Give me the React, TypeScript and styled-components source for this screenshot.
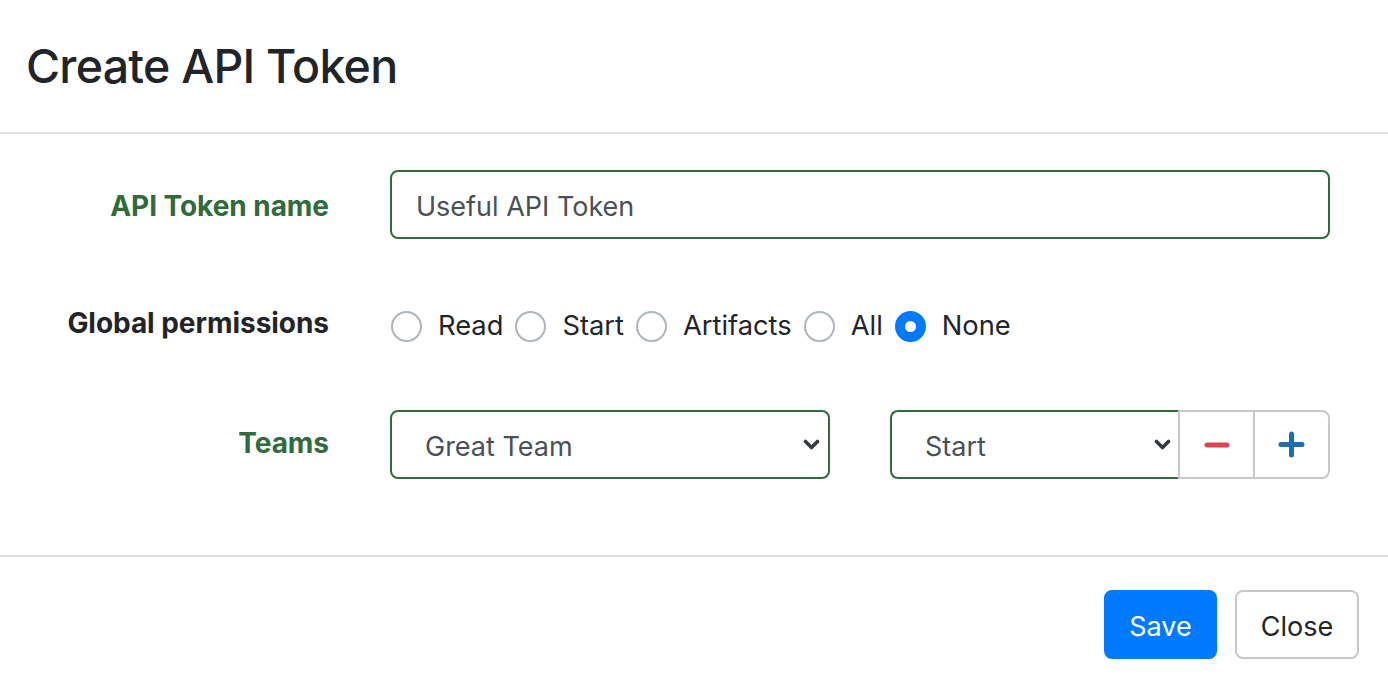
import React from "react";
import styled, { createGlobalStyle, css } from "styled-components";

const GlobalStyle = createGlobalStyle`
  html, body { margin: 0; padding: 0; background: #ffffff; }
  body {
    font-family: Inter, "Liberation Sans", Arial, sans-serif;
    color: #212529;
    -webkit-font-smoothing: antialiased;
  }
  * { box-sizing: border-box; }
`;

const GREEN = "#2f6b3b";

const Modal = styled.div`
  width: 1388px;
  height: 688px;
  display: flex;
  flex-direction: column;
  background: #fff;
  overflow: hidden;
`;

const Header = styled.header`
  height: 134px;
  padding: 37px 28px 0;
  border-bottom: 2px solid #dee2e6;
`;

const Title = styled.h4`
  margin: 0 0 0 -2px;
  font-size: 46.5px;
  line-height: 58px;
  font-weight: 500;
  letter-spacing: -0.75px;
  color: #212529;
`;

const Body = styled.div`
  display: flex;
  flex-direction: column;
  gap: 51px;
  padding: 36px 58px 76px 28px;
  border-bottom: 2px solid #dee2e6;
`;

const FormRow = styled.div`
  display: grid;
  grid-template-columns: 301px 1fr;
  column-gap: 61px;
  align-items: center;
  height: 69px;
`;

const Label = styled.label<{ $valid?: boolean; $shift?: number }>`
  text-align: right;
  font-size: 28px;
  font-weight: 700;
  letter-spacing: -0.05px;
  line-height: 42px;
  color: ${(p) => (p.$valid ? GREEN : "#212529")};
  margin-top: ${(p) => p.$shift ?? 0}px;
`;

const fieldBase = css`
  height: 69px;
  font-family: inherit;
  font-size: 27px;
  color: #495057;
  background: #fff;
  border: 2px solid ${GREEN};
  border-radius: 8px;
  outline: none;
`;

const TextInput = styled.input`
  ${fieldBase};
  width: 100%;
  padding: 3px 24px 0;
`;

const RadioGroup = styled.div`
  display: flex;
  align-items: center;
  margin-top: 3px;
`;

const RadioItem = styled.label`
  display: flex;
  align-items: center;
  margin-left: 1px;
  margin-right: 11px;
  font-size: 27.3px;
  line-height: 42px;
  color: #212529;
`;

const RadioCircle = styled.span<{ $checked?: boolean }>`
  width: 31px;
  height: 31px;
  border-radius: 50%;
  margin-right: 16px;
  display: flex;
  align-items: center;
  justify-content: center;
  ${(p) =>
    p.$checked
      ? css`
          background: #007bff;
          border: 2px solid #007bff;
          &::after {
            content: "";
            width: 11px;
            height: 11px;
            border-radius: 50%;
            background: #fff;
          }
        `
      : css`
          background: #fff;
          border: 2px solid #adb5bd;
        `}
`;

const TeamsGrid = styled.div`
  display: grid;
  grid-template-columns: 1fr 1fr;
  column-gap: 60px;
  height: 69px;
`;

const SelectWrap = styled.div`
  position: relative;
  flex: 1;
  min-width: 0;
  height: 69px;
`;

const Select = styled.select<{ $grouped?: boolean }>`
  ${fieldBase};
  width: 100%;
  appearance: none;
  -webkit-appearance: none;
  padding: 3px 48px 0 33px;
  ${(p) =>
    p.$grouped &&
    css`
      border-right: 0;
      border-radius: 8px 0 0 8px;
    `}
`;

const Chevron = styled.svg<{ $grouped?: boolean }>`
  position: absolute;
  right: ${(p) => (p.$grouped ? "7px" : "10px")};
  top: 28px;
  width: 17px;
  height: 13px;
  pointer-events: none;
`;

const InputGroup = styled.div`
  display: flex;
  height: 69px;
`;

const GroupButton = styled.button<{ $last?: boolean }>`
  width: ${(p) => (p.$last ? "77px" : "75px")};
  height: 69px;
  display: flex;
  align-items: center;
  justify-content: center;
  background: #fff;
  border: 2px solid #c8c8c8;
  border-right-width: ${(p) => (p.$last ? "2px" : "0")};
  border-radius: ${(p) => (p.$last ? "0 8px 8px 0" : "0")};
  padding: 0;
  cursor: pointer;
`;

const Footer = styled.footer`
  display: flex;
  justify-content: flex-end;
  gap: 18px;
  padding: 33px 29px 0;
`;

const Button = styled.button<{ $primary?: boolean }>`
  height: 69px;
  font-family: inherit;
  font-size: 27px;
  border-radius: 8px;
  padding: 3px 0 0;
  cursor: pointer;
  ${(p) =>
    p.$primary
      ? css`
          width: 113px;
          background: #007bff;
          border: 2px solid #007bff;
          color: #fff;
        `
      : css`
          width: 124px;
          background: #fff;
          border: 2px solid #c8c8c8;
          color: #212529;
        `}
`;

const ChevronIcon = ({ grouped }: { grouped?: boolean }) => (
  <Chevron $grouped={grouped} viewBox="0 0 17 13">
    <path d="M2.5 3.5 L8.5 9.5 L14.5 3.5" fill="none" stroke="#343a40" strokeWidth="3.6" strokeLinecap="round" strokeLinejoin="round" />
  </Chevron>
);

const permissions = ["Read", "Start", "Artifacts", "All", "None"];

export default function App() {
  return (
    <>
      <GlobalStyle />
      <Modal>
        <Header>
          <Title>Create API Token</Title>
        </Header>
        <Body>
          <FormRow>
            <Label $valid $shift={2}>API Token name</Label>
            <TextInput defaultValue="Useful API Token" />
          </FormRow>
          <FormRow>
            <Label $shift={-3}>Global permissions</Label>
            <RadioGroup>
              {permissions.map((p) => (
                <RadioItem key={p}>
                  <RadioCircle $checked={p === "None"} />
                  {p}
                </RadioItem>
              ))}
            </RadioGroup>
          </FormRow>
          <FormRow>
            <Label $valid $shift={-3}>Teams</Label>
            <TeamsGrid>
              <SelectWrap>
                <Select defaultValue="Great Team">
                  <option>Great Team</option>
                </Select>
                <ChevronIcon />
              </SelectWrap>
              <InputGroup>
                <SelectWrap>
                  <Select $grouped defaultValue="Start">
                    <option>Start</option>
                  </Select>
                  <ChevronIcon grouped />
                </SelectWrap>
                <GroupButton aria-label="remove">
                  <svg width="26" height="6" viewBox="0 0 26 6">
                    <line x1="3" y1="3" x2="23" y2="3" stroke="#d9464b" strokeWidth="5" strokeLinecap="round" />
                  </svg>
                </GroupButton>
                <GroupButton $last aria-label="add">
                  <svg width="27" height="27" viewBox="0 0 27 27">
                    <path d="M3 13.5 H24 M13.5 3 V24" stroke="#1f6db1" strokeWidth="5" strokeLinecap="round" />
                  </svg>
                </GroupButton>
              </InputGroup>
            </TeamsGrid>
          </FormRow>
        </Body>
        <Footer>
          <Button $primary>Save</Button>
          <Button>Close</Button>
        </Footer>
      </Modal>
    </>
  );
}
